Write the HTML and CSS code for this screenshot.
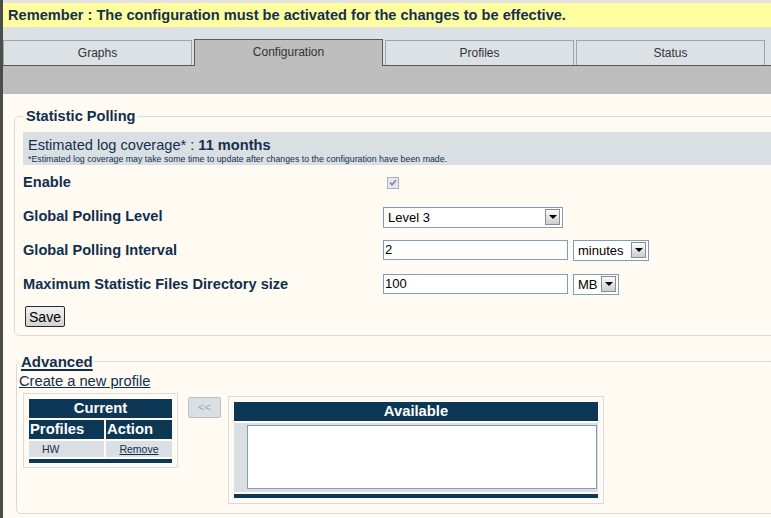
FILE: index.html
```html
<!DOCTYPE html>
<html>
<head>
<meta charset="utf-8">
<title>Statistics</title>
<link rel="stylesheet" href="styles.css">
</head>
<body>
<div class="page">
  <div class="topline"></div>
  <div class="notice">Remember : The configuration must be activated for the changes to be effective.</div>
  <div class="tabbar">
    <div class="tab">Graphs</div>
    <div class="tab active">Configuration</div>
    <div class="tab">Profiles</div>
    <div class="tab">Status</div>
  </div>
  <div class="subbar"></div>
  <div class="content">
    <fieldset class="box polling">
      <legend>Statistic Polling</legend>
      <div class="coverage">
        <div class="cov-main">Estimated log coverage* : <b>11 months</b></div>
        <div class="cov-note">*Estimated log coverage may take some time to update after changes to the configuration have been made.</div>
      </div>
      <div class="form">
        <div class="label">Enable</div>
        <div class="field">
          <span class="checkbox"><svg width="12" height="12" viewBox="0 0 12 12"><rect x="0.5" y="0.5" width="11" height="11" fill="#e6e8ea" stroke="#a9b3bc"/><path d="M3 5.5 L5 7.8 L9 3.2" fill="none" stroke="#6f7fc4" stroke-width="1.6"/></svg></span>
        </div>
        <div class="label">Global Polling Level</div>
        <div class="field">
          <div class="select level"><span>Level 3</span><span class="arrow"></span></div>
        </div>
        <div class="label">Global Polling Interval</div>
        <div class="field">
          <div class="input">2</div>
          <div class="select minutes"><span>minutes</span><span class="arrow"></span></div>
        </div>
        <div class="label">Maximum Statistic Files Directory size</div>
        <div class="field">
          <div class="input">100</div>
          <div class="select mb"><span>MB</span><span class="arrow"></span></div>
        </div>
      </div>
      <button class="save">Save</button>
    </fieldset>

    <fieldset class="box advanced">
      <legend>Advanced</legend>
      <a class="newprofile" href="#">Create a new profile</a>
      <div class="profiles">
        <div class="current">
          <div class="grid">
            <div class="head span">Current</div>
            <div class="head left">Profiles</div>
            <div class="head left">Action</div>
            <div class="cell name">HW</div>
            <div class="cell act"><a href="#">Remove</a></div>
            <div class="bar span"></div>
          </div>
        </div>
        <div class="move">&lt;&lt;</div>
        <div class="available">
          <div class="head">Available</div>
          <div class="listarea"><div class="listbox"></div></div>
          <div class="bar"></div>
        </div>
      </div>
    </fieldset>
  </div>
</div>
</body>
</html>
```
FILE: styles.css
```css
html, body {
  margin: 0;
  padding: 0;
}
body {
  width: 771px;
  height: 518px;
  overflow: hidden;
  font-family: "Liberation Sans", Arial, sans-serif;
  background: #fffbf2;
}
.page {
  border-left: 3px solid #4a4e4a;
  min-height: 518px;
  box-sizing: border-box;
}
.topline {
  height: 3px;
  background: #e2e2e2;
}
.notice {
  height: 24px;
  line-height: 24px;
  background: #ffffa0;
  color: #14304e;
  font-weight: bold;
  font-size: 14.6px;
  padding-left: 5px;
  white-space: nowrap;
}
.tabbar {
  display: flex;
  align-items: flex-end;
  gap: 2px;
  padding-top: 13px;
  height: 25px;
  background: #dbe1e5;
  border-bottom: 1px solid #585858;
}
.tab {
  width: 187px;
  height: 24px;
  line-height: 25px;
  border: 1px solid #a4a4a4;
  border-bottom: none;
  text-align: center;
  font-size: 12px;
  color: #333;
  background: #dbe1e5;
}
.tab.active {
  height: 26px;
  line-height: 24px;
  margin-bottom: -1px;
  background: #bebebe;
  border-color: #5a5a5a;
  position: relative;
}
.subbar {
  height: 28px;
  background: #bebebe;
}
.content {
  padding-top: 14px;
}
fieldset.box {
  border: 1px solid #d3dbe1;
  border-radius: 5px;
  margin: 0;
}
fieldset.polling {
  margin: 0 -40px 0 11px;
  padding: 8px 0 8px 8px;
}
fieldset.polling legend {
  font-size: 14.6px;
  font-weight: bold;
  color: #102f4e;
  padding: 0 3px;
}
.coverage {
  background: #d9dfe3;
  height: 28px;
  padding: 5px 0 0 5px;
  color: #14304e;
}
.cov-main {
  font-size: 14.6px;
  line-height: 17px;
}
.cov-note {
  font-size: 8.8px;
  line-height: 11px;
}
.form {
  display: grid;
  grid-template-columns: 360px 1fr;
  grid-auto-rows: 34px;
  align-items: center;
}
.label {
  font-size: 14.6px;
  font-weight: bold;
  color: #102f4e;
}
.field {
  display: flex;
  align-items: center;
  gap: 5px;
}
.checkbox {
  display: block;
  width: 12px;
  height: 12px;
  margin-left: 4px;
  margin-top: 2px;
}
.checkbox svg {
  display: block;
}
.select {
  display: flex;
  align-items: center;
  justify-content: space-between;
  box-sizing: border-box;
  height: 21px;
  border: 1px solid #7f9db9;
  background: #fff;
  font-size: 13px;
  color: #000;
  padding-left: 4px;
}
.select.level { width: 180px; margin-top: 2px; }
.select.minutes { width: 76px; }
.select.mb { width: 46px; }
.arrow {
  box-sizing: border-box;
  width: 15px;
  height: 16px;
  margin-right: 2px;
  border: 1px solid #8c8c8c;
  background: linear-gradient(#fbfbfb, #cdcdcd);
  display: flex;
  align-items: center;
  justify-content: center;
}
.arrow::after {
  content: "";
  border-left: 4px solid transparent;
  border-right: 4px solid transparent;
  border-top: 4px solid #000;
}
.input {
  box-sizing: border-box;
  width: 185px;
  height: 20px;
  line-height: 18px;
  border: 1px solid #7f9db9;
  background: #fff;
  font-size: 13px;
  padding-left: 1px;
}
.save {
  display: block;
  margin: 5px 0 0 2px;
  width: 40px;
  height: 21px;
  padding: 0;
  border: 1px solid #1e2b38;
  border-radius: 2px;
  background: linear-gradient(#f2f2f2, #d2d2d2);
  font-family: "Liberation Sans", Arial, sans-serif;
  font-size: 14px;
  color: #000;
}
fieldset.advanced {
  margin: 17px -40px 0 13px;
  padding: 3px 0 9px 2px;
}
fieldset.advanced legend {
  font-size: 15px;
  font-weight: bold;
  color: #102f4e;
  padding: 0 2px;
  text-decoration: underline;
  text-decoration-thickness: 2px;
  text-underline-offset: 2px;
}
.newprofile {
  display: block;
  width: max-content;
  font-size: 14.7px;
  line-height: 16px;
  color: #102f4e;
  text-decoration: underline;
}
.profiles {
  display: flex;
  align-items: flex-start;
  margin-top: 4px;
}
.current {
  margin-left: 4px;
  border: 1px solid #d6dde2;
  padding: 5px 5px 4px 5px;
}
.grid {
  display: grid;
  grid-template-columns: 75px 66px;
  gap: 2px;
}
.span {
  grid-column: 1 / -1;
}
.head {
  background: #0d3855;
  color: #fff;
  font-weight: bold;
  font-size: 14.8px;
  height: 19px;
  line-height: 19px;
  text-align: center;
}
.head.left {
  text-align: left;
  padding-left: 1px;
}
.cell {
  background: #d9dfe3;
  height: 16px;
  line-height: 16px;
  font-size: 10.5px;
  color: #1e2e3e;
}
.cell.name {
  padding-left: 13px;
}
.cell.act {
  text-align: center;
}
.cell.act a {
  color: #102f4e;
  text-decoration: underline;
}
.bar {
  background: #0d3855;
  height: 4px;
}
.move {
  margin: 4px 0 0 10px;
  box-sizing: border-box;
  width: 33px;
  height: 21px;
  line-height: 19px;
  text-align: center;
  background: #dadfe3;
  border: 1px solid #b9bfc4;
  border-radius: 2px;
  color: #a4a4a4;
  font-size: 11px;
}
.available {
  margin: 3px 0 0 7px;
  width: 364px;
  border: 1px solid #d6dde2;
  padding: 5px;
}
.available .head {
  margin-bottom: 2px;
}
.listarea {
  background: #d9dfe3;
  height: 64px;
  padding: 2px 1px 3px 13px;
  margin-bottom: 2px;
}
.listbox {
  box-sizing: border-box;
  width: 350px;
  height: 64px;
  border: 1px solid #7f9db9;
  background: #fff;
}
```
